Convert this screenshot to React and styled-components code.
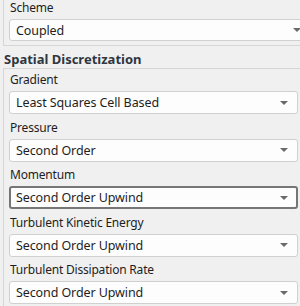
import React from "react";
import styled, { createGlobalStyle } from "styled-components";

const Global = createGlobalStyle`
  html, body { margin: 0; padding: 0; overflow: hidden; background: #f0f0f0; }
  body { font-family: "Noto Sans", "Open Sans", sans-serif; }
`;

const Page = styled.div`
  width: 300px;
  height: 306px;
  overflow: hidden;
  background: #f0f0f0;
  color: #1e1e1e;
  font-size: 12.5px;
`;

const Group = styled.div`
  margin-left: 3px;
  width: ${(p) => (p.$wide ? "330px" : "310px")};
  border: 1px solid #d6d6d6;
  border-top: ${(p) => (p.$open ? "none" : "1px solid #d6d6d6")};
  padding: ${(p) => (p.$open ? "0 0 0 5px" : "3px 0 0 5px")};
  display: flex;
  flex-direction: column;
`;

const Row = styled.div`
  display: flex;
  flex-direction: column;
  gap: 3px;
  margin-bottom: ${(p) => (p.$mb != null ? p.$mb : 5.5)}px;
`;

const Label = styled.div`
  font-size: 12px;
  letter-spacing: -0.2px;
  line-height: 16px;
  height: 16px;
  padding-left: 1px;
  white-space: nowrap;
`;

const Header = styled.div`
  font-weight: 700;
  font-size: 13px;
  line-height: 16px;
  color: #2f3640;
  padding: 5px 0 0 4px;
  height: 17px;
`;

const Select = styled.div`
  position: relative;
  box-sizing: border-box;
  width: ${(p) => (p.$wide ? "302px" : "289px")};
  height: ${(p) => p.$h || 23}px;
  background: #fdfdfd;
  border: ${(p) => (p.$focused ? "2px solid #767676" : "1px solid #d0d0d0")};
  border-radius: 3px;
  display: flex;
  align-items: center;
  padding-left: ${(p) => (p.$focused ? "5px" : "6px")};
  letter-spacing: -0.1px;
  white-space: nowrap;
`;

const Arrow = styled.span`
  position: absolute;
  right: ${(p) => (p.$focused ? "8px" : "9px")};
  top: 50%;
  margin-top: -2px;
  width: 0;
  height: 0;
  border-left: 4.5px solid transparent;
  border-right: 4.5px solid transparent;
  border-top: 4.5px solid #6a6a6a;
`;

const fields = [
  { label: "Gradient", value: "Least Squares Cell Based" },
  { label: "Pressure", value: "Second Order" },
  { label: "Momentum", value: "Second Order Upwind", focused: true },
  { label: "Turbulent Kinetic Energy", value: "Second Order Upwind" },
  { label: "Turbulent Dissipation Rate", value: "Second Order Upwind" },
];

export default function App() {
  return (
    <Page>
      <Global />
      <Group $open $wide>
        <Row $mb={4}>
          <Label>Scheme</Label>
          <Select $wide $h={22}>
            Coupled
            <Arrow />
          </Select>
        </Row>
      </Group>
      <Header>Spatial Discretization</Header>
      <Group>
        {fields.map((f) => (
          <Row key={f.label}>
            <Label>{f.label}</Label>
            <Select $focused={f.focused}>
              {f.value}
              <Arrow $focused={f.focused} />
            </Select>
          </Row>
        ))}
      </Group>
    </Page>
  );
}
